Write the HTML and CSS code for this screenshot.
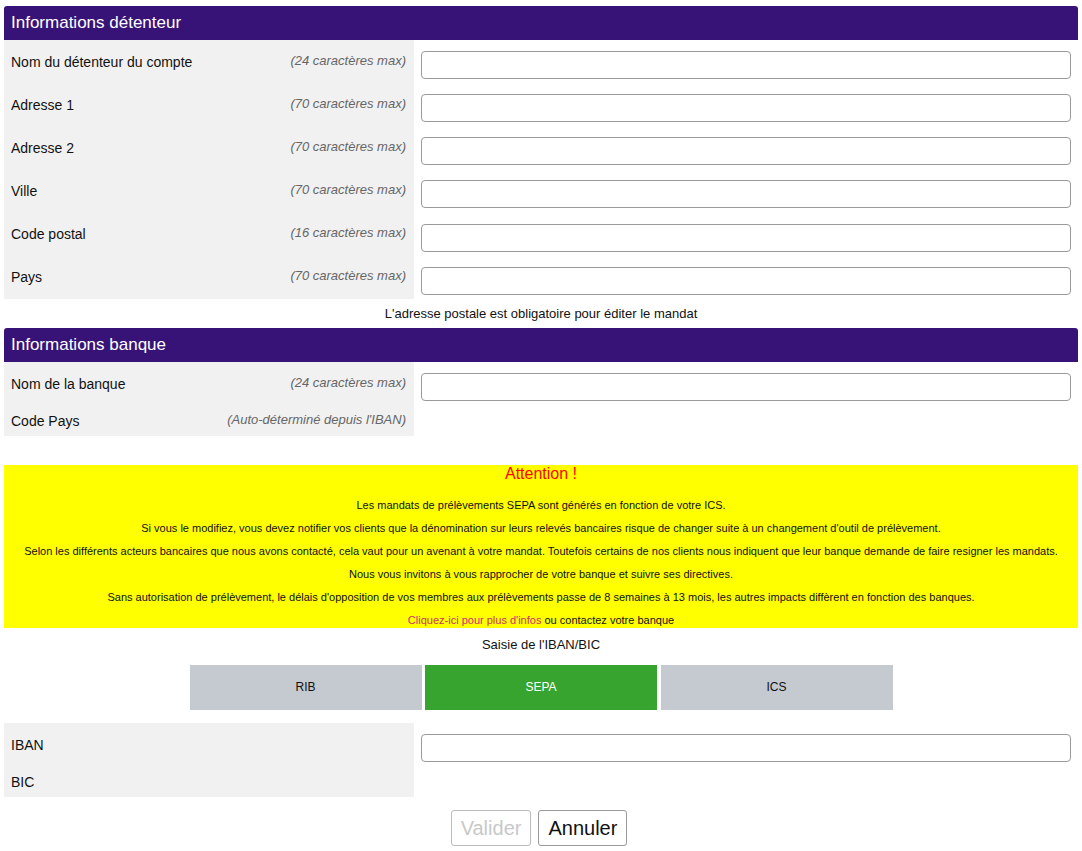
FILE: index.html
```html
<!DOCTYPE html>
<html lang="fr">
<head>
    <meta charset="UTF-8">
    <title>Mandat SEPA</title>
    <link rel="stylesheet" href="styles.css">
</head>
<body>
    <div class="page">
        <div class="section-title">Informations détenteur</div>
        <div class="form-grid">
            <div class="label-cell"><span>Nom du détenteur du compte</span><span class="hint">(24 caractères max)</span></div>
            <div class="field-cell"><input type="text" maxlength="24"></div>

            <div class="label-cell"><span>Adresse 1</span><span class="hint">(70 caractères max)</span></div>
            <div class="field-cell"><input type="text" maxlength="70"></div>

            <div class="label-cell"><span>Adresse 2</span><span class="hint">(70 caractères max)</span></div>
            <div class="field-cell"><input type="text" maxlength="70"></div>

            <div class="label-cell"><span>Ville</span><span class="hint">(70 caractères max)</span></div>
            <div class="field-cell"><input type="text" maxlength="70"></div>

            <div class="label-cell"><span>Code postal</span><span class="hint">(16 caractères max)</span></div>
            <div class="field-cell"><input type="text" maxlength="16"></div>

            <div class="label-cell"><span>Pays</span><span class="hint">(70 caractères max)</span></div>
            <div class="field-cell"><input type="text" maxlength="70"></div>
        </div>

        <p class="note">L'adresse postale est obligatoire pour éditer le mandat</p>

        <div class="section-title">Informations banque</div>
        <div class="form-grid">
            <div class="label-cell"><span>Nom de la banque</span><span class="hint">(24 caractères max)</span></div>
            <div class="field-cell"><input type="text" maxlength="24"></div>

            <div class="label-cell short"><span>Code Pays</span><span class="hint">(Auto-déterminé depuis l'IBAN)</span></div>
            <div class="field-cell short"></div>
        </div>

        <div class="attention">
            <div class="attention-title">Attention !</div>
            <p>Les mandats de prélèvements SEPA sont générés en fonction de votre ICS.</p>
            <p>Si vous le modifiez, vous devez notifier vos clients que la dénomination sur leurs relevés bancaires risque de changer suite à un changement d'outil de prélèvement.</p>
            <p>Selon les différents acteurs bancaires que nous avons contacté, cela vaut pour un avenant à votre mandat. Toutefois certains de nos clients nous indiquent que leur banque demande de faire resigner les mandats.</p>
            <p>Nous vous invitons à vous rapprocher de votre banque et suivre ses directives.</p>
            <p>Sans autorisation de prélèvement, le délais d'opposition de vos membres aux prélèvements passe de 8 semaines à 13 mois, les autres impacts diffèrent en fonction des banques.</p>
            <p><a href="#">Cliquez-ici pour plus d'infos</a> ou contactez votre banque</p>
        </div>

        <p class="note entry-title">Saisie de l'IBAN/BIC</p>

        <div class="tabs">
            <div class="tab">RIB</div>
            <div class="tab active">SEPA</div>
            <div class="tab">ICS</div>
        </div>

        <div class="form-grid iban">
            <div class="label-cell"><span>IBAN</span></div>
            <div class="field-cell"><input type="text"></div>

            <div class="label-cell short"><span>BIC</span></div>
            <div class="field-cell short"></div>
        </div>

        <div class="actions">
            <button disabled>Valider</button>
            <button>Annuler</button>
        </div>
    </div>
</body>
</html>
```

FILE: styles.css
```css
body {
    font-family: "Liberation Sans", Arial, sans-serif;
    margin: 0;
    padding: 6px 4px 0 4px;
    color: #111111;
    background-color: #ffffff;
    font-size: 14px;
}

.page {
    display: flex;
    flex-direction: column;
}

.section-title {
    background-color: #371377;
    color: #ffffff;
    font-size: 17px;
    height: 34px;
    line-height: 34px;
    padding: 0 7px;
    border-radius: 3px 3px 0 0;
}

.form-grid {
    display: grid;
    grid-template-columns: 410px 1fr;
}

.label-cell {
    background-color: #f1f1f1;
    display: flex;
    justify-content: space-between;
    align-items: center;
    height: 43.17px;
    padding: 0 8px 0 7px;
    box-sizing: border-box;
}

.label-cell.short,
.field-cell.short {
    height: 31px;
}

.hint {
    font-style: italic;
    color: #666666;
    font-size: 13px;
    margin-top: -3px;
}

.field-cell {
    padding: 11px 7px 0 7px;
    height: 43.17px;
    box-sizing: border-box;
}

.field-cell input {
    display: block;
    width: 100%;
    height: 28px;
    box-sizing: border-box;
    border: 1px solid #9a9a9a;
    border-radius: 4px;
    background-color: #ffffff;
    font-family: inherit;
    font-size: 14px;
    padding: 0 6px;
}

.note {
    margin: 7px 0;
    font-size: 13px;
    line-height: 15px;
    text-align: center;
}

.attention {
    background-color: #ffff00;
    margin-top: 29px;
    text-align: center;
    height: 163px;
    overflow: hidden;
}

.attention-title {
    color: #ff0000;
    font-size: 16px;
    line-height: 18px;
}

.attention p {
    margin: 10px 0 0 0;
    font-size: 11px;
    line-height: 13px;
    color: #111111;
}

.attention p:first-of-type {
    margin-top: 16px;
}

.attention a {
    color: #c8336a;
    text-decoration: none;
}

.entry-title {
    margin: 9px 0 13px 0;
}

.tabs {
    display: flex;
    justify-content: center;
    gap: 3.5px;
}

.tab {
    width: 232px;
    height: 45px;
    line-height: 45px;
    text-align: center;
    font-size: 12px;
    background-color: #c4cad0;
    color: #111111;
}

.tab.active {
    background-color: #36a42f;
    color: #ffffff;
}

.iban {
    margin-top: 13px;
}

.actions {
    display: flex;
    justify-content: center;
    gap: 7px;
    margin-top: 13px;
    padding-right: 4px;
}

.actions button {
    height: 36px;
    padding: 0 9px;
    font-family: inherit;
    font-size: 20px;
    background-color: #ffffff;
    border: 1px solid #999999;
    border-radius: 3px;
    color: #111111;
}

.actions button:disabled {
    color: #c8c8c8;
    border-color: #bbbbbb;
}
```
